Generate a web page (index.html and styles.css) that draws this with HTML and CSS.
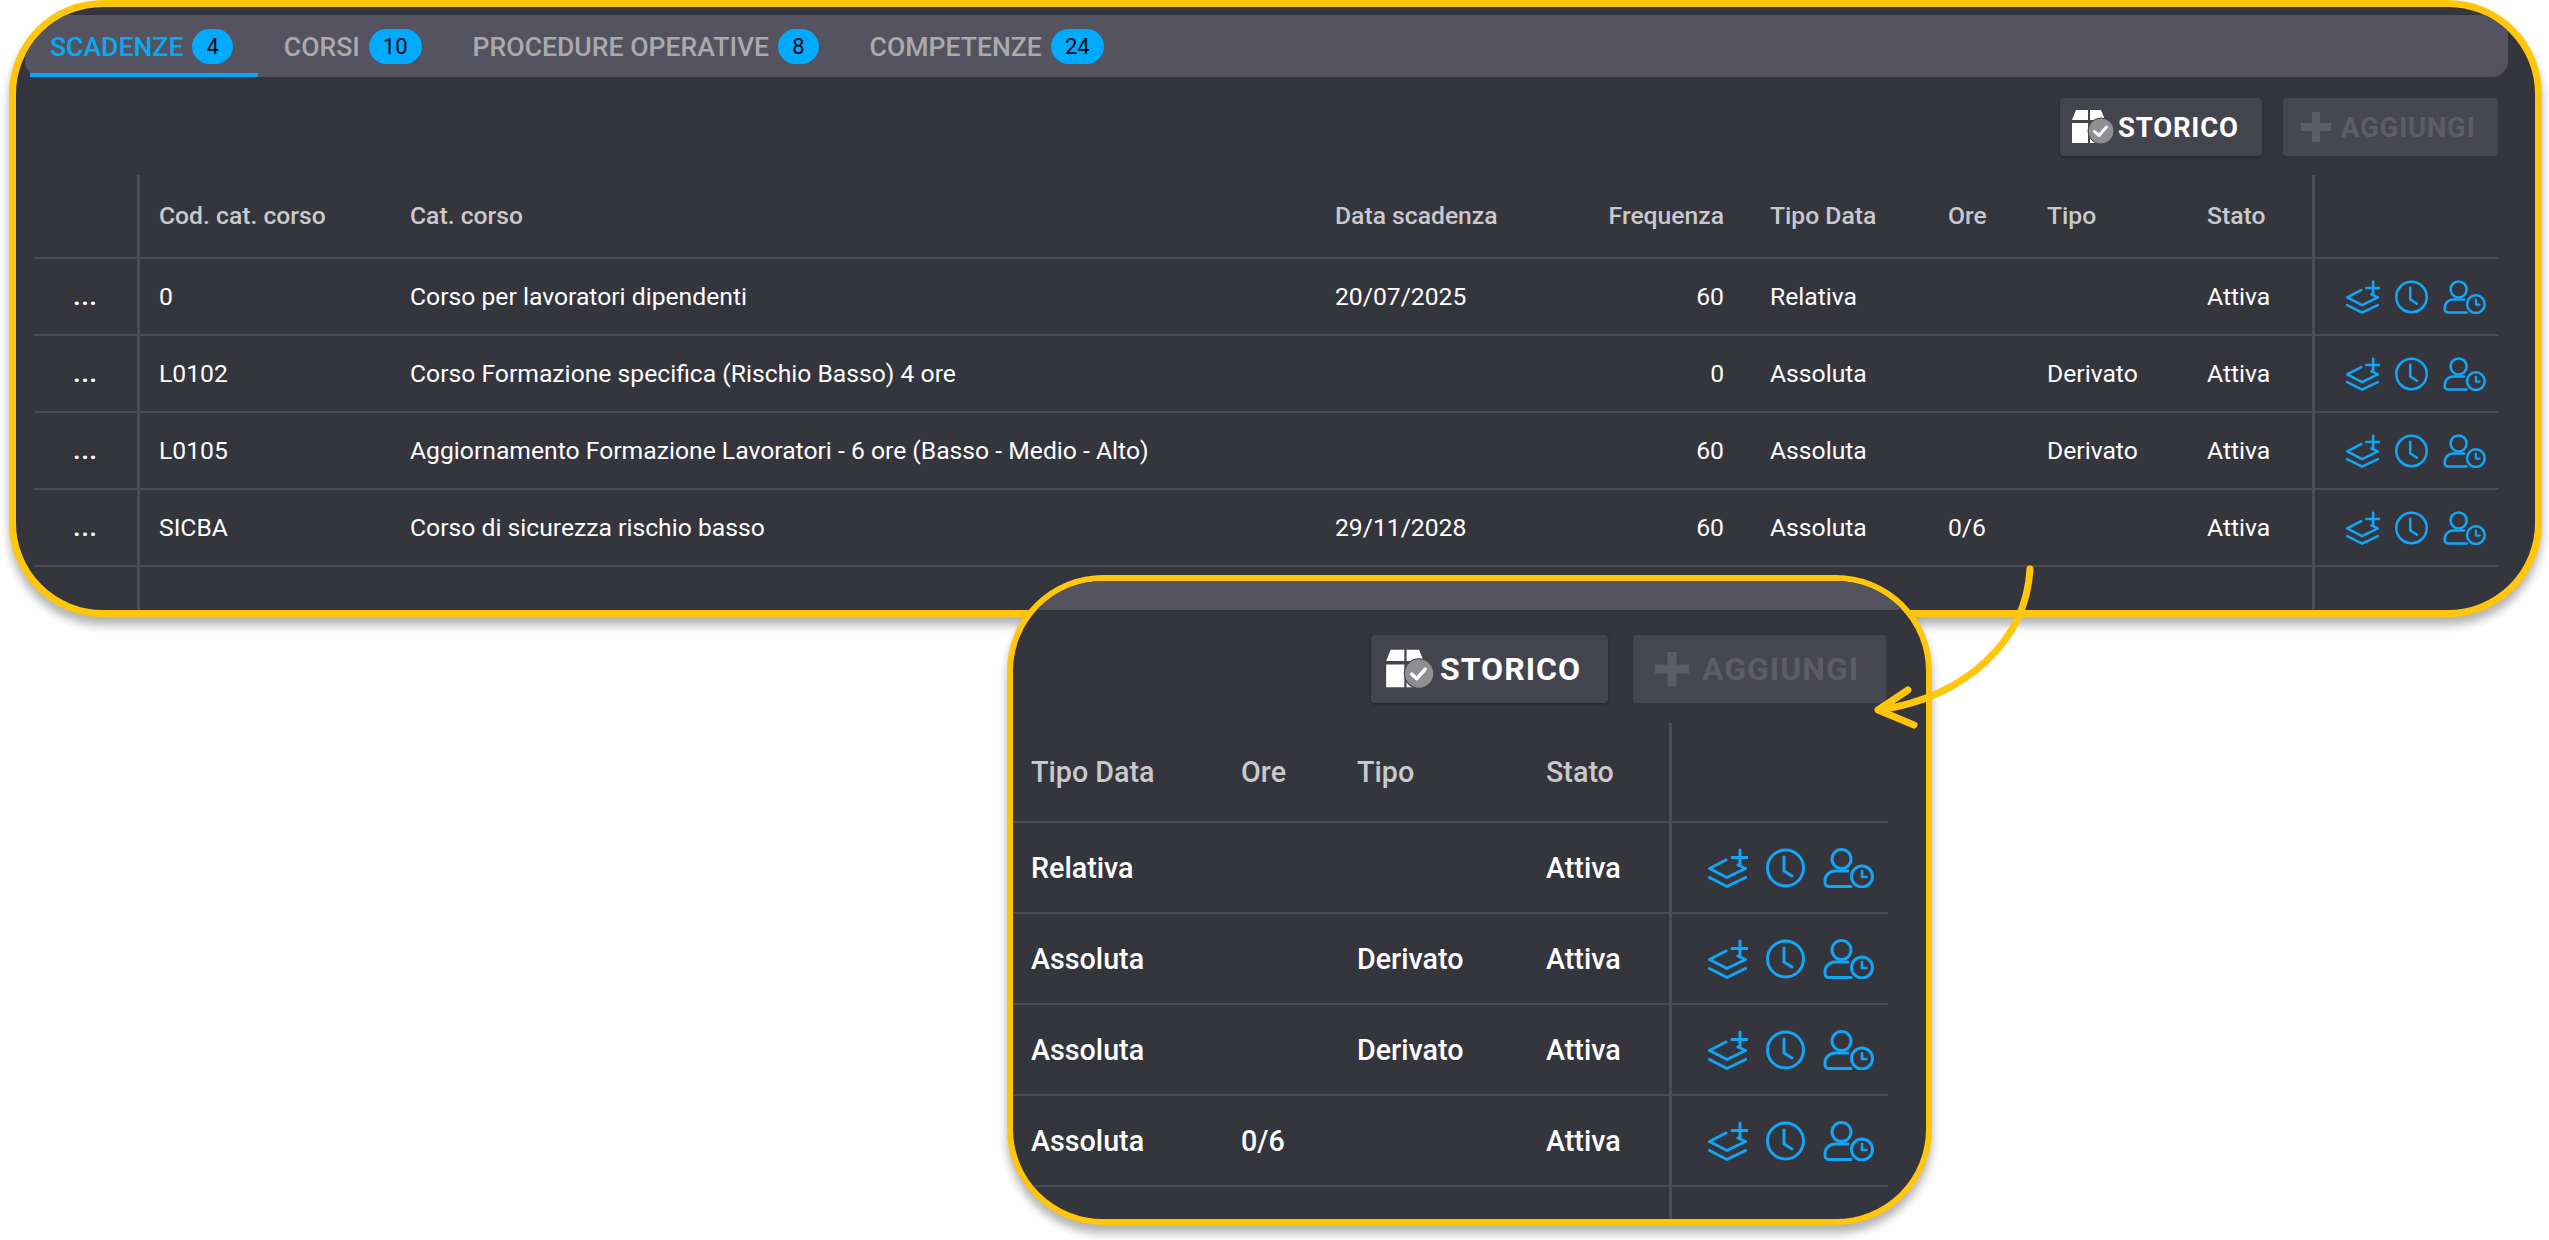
FILE: index.html
```html
<!DOCTYPE html>
<html lang="en">
<head>
    <meta charset="UTF-8">
    <title>Scadenze</title>
    <link rel="stylesheet" href="styles.css">
</head>
<body>
    <!-- icons used by every row -->
    <svg class="icon-defs" width="0" height="0">
        <symbol id="i-layers" viewBox="0 0 41 40">
            <path d="M19 12 2.500 20.500 20 29.500 38.500 20.500 31 17M2.500 29.500 20 38.500 38.500 29.500M33 2V17M25 9.500H41" fill="none" stroke="currentColor" stroke-width="3" stroke-linecap="round" stroke-linejoin="round"/>
        </symbol>
        <symbol id="i-clock" viewBox="0 0 39 40">
            <circle cx="19.500" cy="20" r="18" fill="none" stroke="currentColor" stroke-width="3"/>
            <path d="M18 9V23L26 28" fill="none" stroke="currentColor" stroke-width="3" stroke-linecap="round" stroke-linejoin="round"/>
        </symbol>
        <symbol id="i-person" viewBox="0 0 51 40">
            <circle cx="18.500" cy="11" r="9.500" fill="none" stroke="currentColor" stroke-width="3"/>
            <path d="M28 38.500H6A4 4 0 0 1 2 34.500V33A10 10 0 0 1 12 23H25" fill="none" stroke="currentColor" stroke-width="3" stroke-linecap="round"/>
            <circle cx="39" cy="28.500" r="10.500" fill="none" stroke="currentColor" stroke-width="3"/>
            <path d="M39 23V29H43.500" fill="none" stroke="currentColor" stroke-width="2.600" stroke-linecap="round" stroke-linejoin="round"/>
        </symbol>
        <symbol id="i-archive" viewBox="0 0 44 34">
            <path d="M5 0H17V10H1ZM19 0H30L34 10H19ZM1 13H17V33H1ZM19 13H26V33H19Z" fill="#fff"/>
            <circle cx="30" cy="21" r="13" fill="#8e8e93" stroke="#44444e" stroke-width="1"/>
            <path d="M23.500 21.500 28 25.500 35.500 17" fill="none" stroke="#fff" stroke-width="3" stroke-linecap="round" stroke-linejoin="round"/>
        </symbol>
        <symbol id="i-plus" viewBox="0 0 30 30">
            <path d="M11 0H19V11H30V19H19V30H11V19H0V11H11Z" fill="currentColor"/>
        </symbol>
    </svg>

    <div class="panel">
        <div class="tabs">
            <div class="tab active">Scadenze <span class="badge">4</span></div>
            <div class="tab">Corsi <span class="badge">10</span></div>
            <div class="tab">Procedure operative <span class="badge">8</span></div>
            <div class="tab">Competenze <span class="badge">24</span></div>
        </div>
        <div class="toolbar">
            <button class="btn"><svg class="btn-archive"><use href="#i-archive"/></svg>STORICO</button>
            <button class="btn disabled"><svg class="btn-plus"><use href="#i-plus"/></svg>AGGIUNGI</button>
        </div>
        <table class="grid">
            <colgroup>
                <col class="c-menu"><col class="c-cod"><col class="c-cat"><col class="c-data"><col class="c-freq">
                <col class="c-tipodata"><col class="c-ore"><col class="c-tipo"><col class="c-stato"><col class="c-actions">
            </colgroup>
            <tr>
                <th></th><th class="sep">Cod. cat. corso</th><th>Cat. corso</th><th>Data scadenza</th><th class="num">Frequenza</th>
                <th>Tipo Data</th><th>Ore</th><th>Tipo</th><th>Stato</th><th class="sep"></th>
            </tr>
            <tr>
                <td class="dots">...</td><td class="sep">0</td><td>Corso per lavoratori dipendenti</td><td>20/07/2025</td><td class="num">60</td>
                <td>Relativa</td><td></td><td></td><td>Attiva</td>
                <td class="sep"><div class="actions"><svg class="a-layers"><use href="#i-layers"/></svg><svg class="a-clock"><use href="#i-clock"/></svg><svg class="a-person"><use href="#i-person"/></svg></div></td>
            </tr>
            <tr>
                <td class="dots">...</td><td class="sep">L0102</td><td>Corso Formazione specifica (Rischio Basso) 4 ore</td><td></td><td class="num">0</td>
                <td>Assoluta</td><td></td><td>Derivato</td><td>Attiva</td>
                <td class="sep"><div class="actions"><svg class="a-layers"><use href="#i-layers"/></svg><svg class="a-clock"><use href="#i-clock"/></svg><svg class="a-person"><use href="#i-person"/></svg></div></td>
            </tr>
            <tr>
                <td class="dots">...</td><td class="sep">L0105</td><td>Aggiornamento Formazione Lavoratori - 6 ore (Basso - Medio - Alto)</td><td></td><td class="num">60</td>
                <td>Assoluta</td><td></td><td>Derivato</td><td>Attiva</td>
                <td class="sep"><div class="actions"><svg class="a-layers"><use href="#i-layers"/></svg><svg class="a-clock"><use href="#i-clock"/></svg><svg class="a-person"><use href="#i-person"/></svg></div></td>
            </tr>
            <tr>
                <td class="dots">...</td><td class="sep">SICBA</td><td>Corso di sicurezza rischio basso</td><td>29/11/2028</td><td class="num">60</td>
                <td>Assoluta</td><td>0/6</td><td></td><td>Attiva</td>
                <td class="sep"><div class="actions"><svg class="a-layers"><use href="#i-layers"/></svg><svg class="a-clock"><use href="#i-clock"/></svg><svg class="a-person"><use href="#i-person"/></svg></div></td>
            </tr>
            <tr class="filler">
                <td></td><td class="sep"></td><td></td><td></td><td></td><td></td><td></td><td></td><td></td><td class="sep"></td>
            </tr>
        </table>
    </div>

    <!-- zoomed detail over the main panel -->
    <div class="callout">
        <div class="strip"></div>
        <div class="toolbar">
            <button class="btn"><svg class="btn-archive"><use href="#i-archive"/></svg>STORICO</button>
            <button class="btn disabled"><svg class="btn-plus"><use href="#i-plus"/></svg>AGGIUNGI</button>
        </div>
        <table class="grid">
            <colgroup>
                <col class="c-tipodata"><col class="c-ore"><col class="c-tipo"><col class="c-stato"><col class="c-actions">
            </colgroup>
            <tr><th>Tipo Data</th><th>Ore</th><th>Tipo</th><th>Stato</th><th class="sep"></th></tr>
            <tr>
                <td>Relativa</td><td></td><td></td><td>Attiva</td>
                <td class="sep"><div class="actions"><svg class="a-layers"><use href="#i-layers"/></svg><svg class="a-clock"><use href="#i-clock"/></svg><svg class="a-person"><use href="#i-person"/></svg></div></td>
            </tr>
            <tr>
                <td>Assoluta</td><td></td><td>Derivato</td><td>Attiva</td>
                <td class="sep"><div class="actions"><svg class="a-layers"><use href="#i-layers"/></svg><svg class="a-clock"><use href="#i-clock"/></svg><svg class="a-person"><use href="#i-person"/></svg></div></td>
            </tr>
            <tr>
                <td>Assoluta</td><td></td><td>Derivato</td><td>Attiva</td>
                <td class="sep"><div class="actions"><svg class="a-layers"><use href="#i-layers"/></svg><svg class="a-clock"><use href="#i-clock"/></svg><svg class="a-person"><use href="#i-person"/></svg></div></td>
            </tr>
            <tr>
                <td>Assoluta</td><td>0/6</td><td></td><td>Attiva</td>
                <td class="sep"><div class="actions"><svg class="a-layers"><use href="#i-layers"/></svg><svg class="a-clock"><use href="#i-clock"/></svg><svg class="a-person"><use href="#i-person"/></svg></div></td>
            </tr>
            <tr class="filler"><td></td><td></td><td></td><td></td><td class="sep"></td></tr>
        </table>
    </div>

    <svg class="arrow" width="2549" height="1240" viewBox="0 0 2549 1240">
        <path d="M2030 569C2026 640 1968 696 1880 710M1908 690 1878 710 1914 725" fill="none" stroke="#ffc60b" stroke-width="7" stroke-linecap="round" stroke-linejoin="round"/>
    </svg>
</body>
</html>
```

FILE: styles.css
```css
body {
    margin: 0;
    padding: 0 8px;
    width: 2549px;
    height: 1240px;
    box-sizing: border-box;
    background-color: #ffffff;
    font-family: Roboto, "Liberation Sans", sans-serif;
    overflow: hidden;
}

.icon-defs {
    position: absolute;
}

/* main panel */
.panel {
    width: 2533px;
    height: 617px;
    margin-left: 1px;
    box-sizing: border-box;
    background-color: #35353e;
    border: 7px solid #ffc60b;
    border-radius: 94px;
    box-shadow: 0 8px 10px rgba(0, 0, 0, 0.3);
    overflow: hidden;
}

.tabs {
    display: flex;
    height: 62px;
    margin: 8px 27px 0 9px;
    padding-left: 5px;
    box-sizing: border-box;
    background-color: #54535f;
    border-radius: 0 0 16px 16px;
}

.tab {
    display: flex;
    align-items: center;
    gap: 9px;
    padding: 0 25px 0 26px;
    font-size: 26.6px;
    font-weight: 500;
    color: #aaaaae;
    text-transform: uppercase;
}

.tab.active {
    padding-left: 20px;
    color: #0aa8f5;
    box-shadow: inset 0 -4px 0 #0aa8f5;
}

.badge {
    height: 35px;
    line-height: 35px;
    padding: 0 14px;
    border-radius: 18px;
    background-color: #00aaff;
    color: #05050a;
    font-size: 22px;
    font-weight: 400;
    text-align: center;
}

.toolbar {
    display: flex;
    justify-content: flex-end;
    gap: 21px;
    margin: 21px 37px 19px 0;
}

.btn {
    display: flex;
    align-items: center;
    gap: 3px;
    width: 202px;
    height: 58px;
    padding: 0 0 0 11px;
    border: none;
    border-radius: 4px;
    background-color: #44444e;
    box-shadow: 0 1px 3px rgba(0, 0, 0, 0.35);
    color: #ffffff;
    font-family: inherit;
    font-size: 27.5px;
    font-weight: 700;
    letter-spacing: 0.8px;
}

.btn.disabled {
    width: 215px;
    gap: 10px;
    padding-left: 18px;
    background-color: #47474f;
    box-shadow: none;
    color: #5d5d67;
}

.btn svg {
    flex: none;
}

.btn-archive {
    width: 44px;
    height: 34px;
}

.btn-plus {
    width: 30px;
    height: 30px;
}

/* data table */
.grid {
    width: 2465px;
    margin-left: 18px;
    table-layout: fixed;
    border-collapse: separate;
    border-spacing: 0;
    font-size: 24.7px;
    color: #ffffff;
}

.grid th,
.grid td {
    padding: 0 22px;
    text-align: left;
    white-space: nowrap;
    border-bottom: 2px solid #4c4c55;
    box-sizing: border-box;
}

.grid th {
    height: 84px;
    padding-bottom: 2px;
    font-weight: 500;
    color: #c9c9cc;
}

.grid td {
    height: 77px;
}

.grid .sep {
    border-left: 3px solid #4c4c55;
    padding-left: 19px;
}

.grid .num {
    text-align: right;
    padding-right: 24px;
}

.grid .dots {
    padding: 0;
    text-align: center;
    font-weight: 700;
    letter-spacing: 1px;
}

.grid .filler td {
    height: 60px;
    border-bottom: none;
}

.c-menu { width: 103px; }
.c-cod { width: 251px; }
.c-cat { width: 925px; }
.c-data { width: 270px; }
.c-freq { width: 165px; }
.c-tipodata { width: 178px; }
.c-ore { width: 99px; }
.c-tipo { width: 160px; }
.c-stato { width: 127px; }
.c-actions { width: 187px; }

.actions {
    display: flex;
    align-items: center;
    gap: 15px;
    margin-left: 11px;
    color: #12a6f6;
}

.actions svg {
    flex: none;
}

.a-layers {
    width: 35px;
    height: 34px;
}

.a-clock {
    width: 33px;
    height: 34px;
}

.a-person {
    width: 43px;
    height: 34px;
}

/* zoomed callout */
.callout {
    position: absolute;
    left: 1007px;
    top: 575px;
    width: 925px;
    height: 650px;
    box-sizing: border-box;
    background-color: #35353e;
    border: 6px solid #ffc60b;
    border-radius: 96px;
    box-shadow: 0 8px 10px rgba(0, 0, 0, 0.3);
    overflow: hidden;
}

.strip {
    height: 29px;
    margin-right: 19px;
    background-color: #54535f;
    border-radius: 0 0 12px 0;
}

.callout .toolbar {
    gap: 25px;
    margin: 25px 40px 20px 0;
}

.callout .btn {
    gap: 5px;
    width: 237px;
    height: 68px;
    padding-left: 14px;
    font-size: 32px;
    letter-spacing: 1px;
}

.callout .btn.disabled {
    width: 253px;
    gap: 13px;
    padding-left: 22px;
}

.callout .btn-archive {
    width: 50px;
    height: 40px;
}

.callout .btn-plus {
    width: 34px;
    height: 34px;
}

.callout .grid {
    width: 875px;
    margin-left: 0;
    font-size: 28.7px;
    font-weight: 500;
}

.callout .grid th,
.callout .grid td {
    padding: 0 18px;
}

.callout .grid th {
    height: 100px;
}

.callout .grid td {
    height: 91px;
}

.callout .grid .filler td {
    height: 40px;
}

.callout .c-tipodata { width: 210px; }
.callout .c-ore { width: 116px; }
.callout .c-tipo { width: 189px; }
.callout .c-stato { width: 141px; }
.callout .c-actions { width: 219px; }

.callout .actions {
    gap: 18px;
    margin-left: 17px;
}

.callout .a-layers {
    width: 41px;
    height: 40px;
}

.callout .a-clock {
    width: 39px;
    height: 40px;
}

.callout .a-person {
    width: 51px;
    height: 40px;
}

.arrow {
    position: absolute;
    left: 0;
    top: 0;
    pointer-events: none;
}
```
